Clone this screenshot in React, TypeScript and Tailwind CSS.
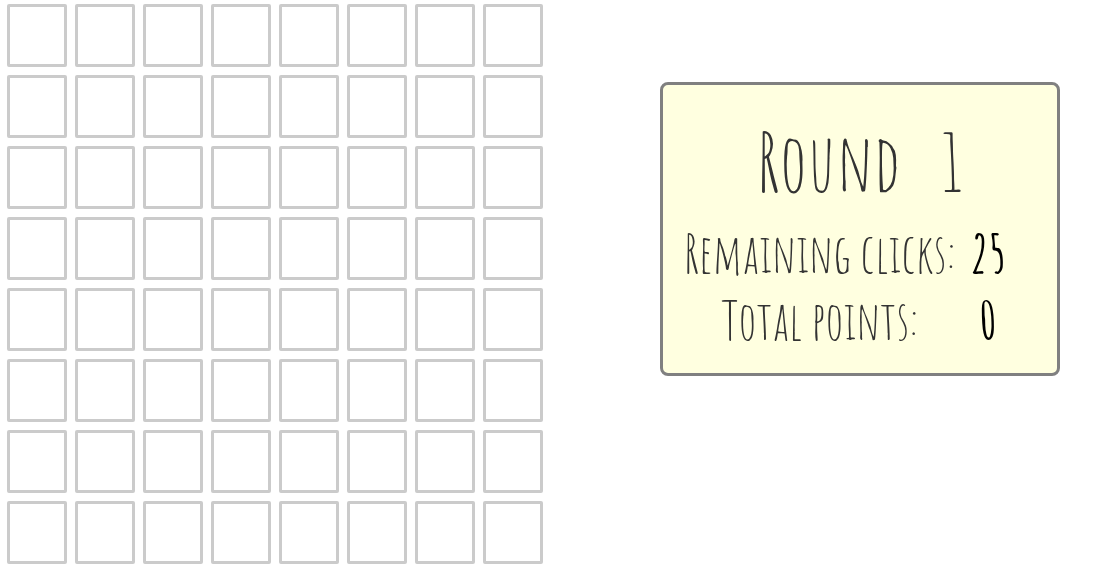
import { useState } from "react";

const SIZE = 8;
const CELLS = Array.from({ length: SIZE * SIZE }, (_, i) => i);

function Board({ onPick }: { onPick: () => void }) {
  return (
    <section aria-label="Board" className="grid shrink-0 grid-cols-8 gap-2">
      {CELLS.map((i) => (
        <button
          key={i}
          type="button"
          aria-label={`Row ${Math.floor(i / SIZE) + 1}, column ${(i % SIZE) + 1}`}
          onClick={onPick}
          className="h-[63px] w-[60px] rounded-xs border-3 border-[#cbcbcb] bg-white"
        />
      ))}
    </section>
  );
}

function ScoreCard({ clicks, points }: { clicks: number; points: number }) {
  return (
    <aside className="mt-[78px] w-[400px] rounded-lg border-3 border-[#808080] bg-[#ffffe0] px-5 pt-8 pb-5 font-['Amatic_SC','Liberation_Sans_Narrow',sans-serif] text-[#333]">
      <h1 className="flex justify-center gap-10 text-[80px] leading-[90px] font-normal">
        <span>Round</span>
        <span>1</span>
      </h1>
      <dl className="mt-3 grid grid-cols-[274px_1fr] text-center text-[53px] leading-[67px]">
        <dt className="font-normal whitespace-nowrap">Remaining clicks:</dt>
        <dd className="w-[62px] font-bold text-black">{clicks}</dd>
        <dt className="font-normal whitespace-nowrap">Total points:</dt>
        <dd className="w-[62px] font-bold text-black">{points}</dd>
      </dl>
    </aside>
  );
}

export default function App() {
  const [clicks, setClicks] = useState(25);
  return (
    <main className="flex items-start justify-between bg-white pt-1 pr-[35px] pb-3 pl-[7px]">
      <Board onPick={() => setClicks((n) => Math.max(0, n - 1))} />
      <ScoreCard clicks={clicks} points={0} />
    </main>
  );
}
